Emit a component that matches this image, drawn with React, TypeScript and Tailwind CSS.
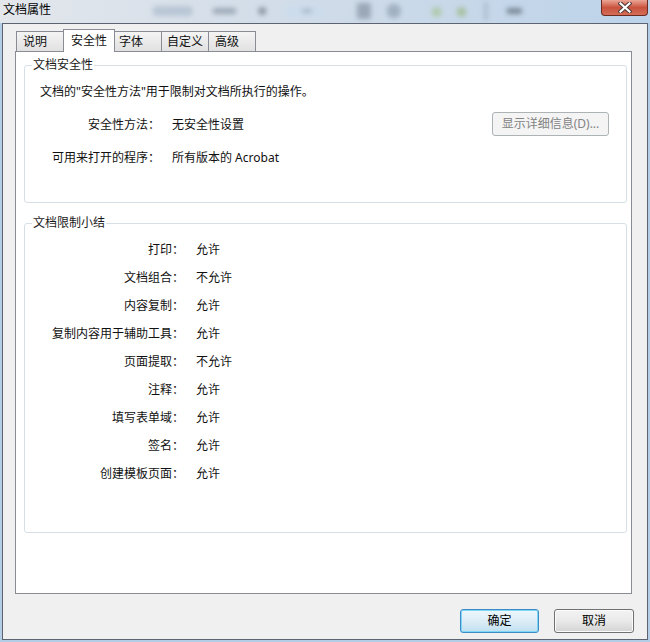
import React from 'react';

const font = "font-['Noto_Sans','Noto_Sans_CJK_SC',sans-serif]";

const tabs = [
    { label: '说明', cls: 'w-[48px] pl-[6px]', active: false },
    { label: '安全性', cls: 'w-[52px] pl-[7px]', active: true },
    { label: '字体', cls: 'w-[48px] pl-[4px]', active: false },
    { label: '自定义', cls: 'w-[48px] pl-[5px]', active: false },
    { label: '高级', cls: 'w-[48px] pl-[6px]', active: false },
];

const limits = [
    ['打印：', '允许'],
    ['文档组合：', '不允许'],
    ['内容复制：', '允许'],
    ['复制内容用于辅助工具：', '允许'],
    ['页面提取：', '不允许'],
    ['注释：', '允许'],
    ['填写表单域：', '允许'],
    ['签名：', '允许'],
    ['创建模板页面：', '允许'],
];

function CloseButton() {
    return (
        <div className="w-[47px] h-[16px] rounded-b-[4px] border border-t-0 border-[#6b2b22] bg-linear-to-b from-[#eaa596] via-[#c9533e] to-[#d46d57] flex items-center justify-center">
            <svg width="14" height="11" viewBox="0 0 14 11">
                <path d="M2.5 1.5 L11.5 9.5 M11.5 1.5 L2.5 9.5" stroke="#4a3a38" strokeWidth="4.2" strokeLinecap="square" fill="none" />
                <path d="M2.5 1.5 L11.5 9.5 M11.5 1.5 L2.5 9.5" stroke="#ffffff" strokeWidth="2.2" strokeLinecap="square" fill="none" />
            </svg>
        </div>
    );
}

function TitleBackdrop() {
    // blurred toolbar showing through the aero glass
    return (
        <svg className="flex-1 h-[23px]" viewBox="0 0 545 23" preserveAspectRatio="none">
            <defs>
                <filter id="blur" x="-50%" y="-50%" width="200%" height="200%">
                    <feGaussianBlur stdDeviation="2.5" />
                </filter>
            </defs>
            <g filter="url(#blur)" opacity="0.55">
                <rect x="95" y="6" width="40" height="10" rx="4" fill="#9fb1c4" />
                <rect x="155" y="8" width="24" height="6" rx="3" fill="#6f7e8e" />
                <circle cx="205" cy="11" r="4" fill="#4f5b68" />
                <rect x="228" y="5" width="38" height="12" rx="5" fill="#c9dcf0" />
                <rect x="245" y="9" width="10" height="4" fill="#7d8ea0" />
                <rect x="300" y="3" width="14" height="16" rx="2" fill="#6f7f90" />
                <rect x="330" y="4" width="14" height="14" rx="6" fill="#7f90a2" />
                <circle cx="380" cy="12" r="5" fill="#9bbf7a" />
                <circle cx="405" cy="12" r="5" fill="#8fb06a" />
                <rect x="428" y="2" width="3" height="18" fill="#8a9aab" />
                <rect x="450" y="8" width="16" height="6" rx="3" fill="#3d4852" />
            </g>
        </svg>
    );
}

function GroupBox({ title, className, children }: { title: string; className: string; children: React.ReactNode }) {
    return (
        <fieldset className={`border border-[#d5dfe5] rounded-[3px] ${className}`}>
            <legend className="ml-[7px] px-[1px] text-[12px] leading-[16px] text-[#1a1a1a]">{title}</legend>
            {children}
        </fieldset>
    );
}

export default function App() {
    return (
        <div className={`w-[650px] h-[642px] bg-[#b4cde6] flex flex-col text-[12px] leading-[16px] text-[#111] ${font}`}>
            <div className="h-[23px] flex items-start bg-linear-to-r from-[#e3e7ec] via-[#cfdbe8] to-[#bcd3ea]">
                <div className="pl-[3px] pt-[2px] w-[58px] shrink-0 text-[12px] leading-[16px] text-black">文档属性</div>
                <TitleBackdrop />
                <div className="mr-[2px]">
                    <CloseButton />
                </div>
            </div>

            <div className="mx-[2px] w-[646px] h-[617px] border border-[#5b6470] bg-[#f0f0f0] flex flex-col">
                <div className="pl-[12px] pt-[5px] flex flex-col">
                    <div className="ml-[1px] h-[23px] flex items-start relative z-10">
                        {tabs.map((t, i) => (
                            <div
                                key={t.label}
                                className={
                                    t.active
                                        ? `${t.cls} ${i > 0 ? '-ml-px' : ''} h-[23px] border border-b-0 border-[#898c95] bg-white flex items-center relative z-10`
                                        : `${t.cls} ${i > 0 ? '-ml-px' : ''} mt-[2px] h-[20px] border border-b-0 border-[#898c95] bg-linear-to-b from-[#f4f4f4] to-[#e1e1e1] flex items-center`
                                }
                            >
                                {t.label}
                            </div>
                        ))}
                    </div>

                    <div className="-mt-px w-[617px] h-[543px] border border-[#898c95] bg-white flex flex-col">
                        <GroupBox title="文档安全性" className="mt-[5px] ml-[8px] mr-[4px] h-[146px]">
                            <p className="mt-[11px] pl-[15px]">文档的"安全性方法"用于限制对文档所执行的操作。</p>
                            <div className="mt-[12px] h-[24px] flex items-center">
                                <span className="w-[135px] text-right pt-[2px]">安全性方法：</span>
                                <span className="ml-[12px] pt-[2px]">无安全性设置</span>
                                <button
                                    disabled
                                    className="ml-auto mr-[17px] w-[117px] h-[24px] rounded-[3px] border border-[#adb2b5] bg-[#f4f4f4] text-[#838383] text-[12px]"
                                >
                                    显示详细信息(D)...
                                </button>
                            </div>
                            <div className="mt-[14px] h-[16px] flex items-center">
                                <span className="w-[135px] text-right">可用来打开的程序：</span>
                                <span className="ml-[12px]">所有版本的 Acrobat</span>
                            </div>
                        </GroupBox>

                        <GroupBox title="文档限制小结" className="mt-[12px] ml-[8px] mr-[4px] h-[318px]">
                            <div className="mt-[11px] flex flex-col gap-[12px]">
                                {limits.map(([k, v]) => (
                                    <div key={k} className="h-[16px] flex items-center">
                                        <span className="w-[159px] text-right">{k}</span>
                                        <span className="ml-[12px]">{v}</span>
                                    </div>
                                ))}
                            </div>
                        </GroupBox>
                    </div>
                </div>

                <div className="mt-[15px] pr-[13px] flex justify-end gap-[15px]">
                    <button className="w-[79px] h-[24px] rounded-[3px] border border-[#3c8dc6] bg-linear-to-b from-[#eef7fc] via-[#dcedf7] to-[#c1e0f0] shadow-[inset_0_0_0_1px_#7fd6f6] text-[12px] text-black">
                        确定
                    </button>
                    <button className="w-[80px] h-[24px] rounded-[3px] border border-[#707070] bg-linear-to-b from-[#f3f3f3] via-[#e9e9e9] to-[#d3d3d3] shadow-[inset_0_0_0_1px_#fbfbfb] text-[12px] text-black">
                        取消
                    </button>
                </div>
            </div>
        </div>
    );
}
